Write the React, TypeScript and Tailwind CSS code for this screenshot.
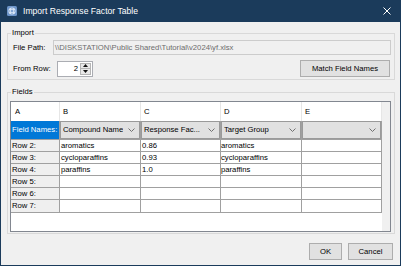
import React from "react";

const rows = [
  { label: "Row 2:", b: "aromatics", c: "0.86", d: "aromatics", e: "" },
  { label: "Row 3:", b: "cycloparaffins", c: "0.93", d: "cycloparaffins", e: "" },
  { label: "Row 4:", b: "paraffins", c: "1.0", d: "paraffins", e: "" },
  { label: "Row 5:", b: "", c: "", d: "", e: "" },
  { label: "Row 6:", b: "", c: "", d: "", e: "" },
  { label: "Row 7:", b: "", c: "", d: "", e: "" },
];

const combos = ["Compound Name", "Response Fac...", "Target Group", ""];

function AppIcon() {
  return (
    <svg width="10" height="10" viewBox="0 0 10 10" className="shrink-0">
      <rect x="0" y="0" width="10" height="10" rx="1.5" fill="#6d95c9" />
      <circle cx="5" cy="5" r="3.6" fill="#d6e4f5" />
      <circle cx="5" cy="5" r="1.2" fill="#7fa3d3" />
      <circle cx="5" cy="2.6" r="0.7" fill="#7fa3d3" />
      <circle cx="5" cy="7.4" r="0.7" fill="#7fa3d3" />
      <circle cx="2.6" cy="5" r="0.7" fill="#7fa3d3" />
      <circle cx="7.4" cy="5" r="0.7" fill="#7fa3d3" />
    </svg>
  );
}

function Chevron() {
  return (
    <svg width="7" height="4" viewBox="0 0 7 4" className="shrink-0">
      <polyline points="0.5,0.5 3.5,3.5 6.5,0.5" fill="none" stroke="#707070" strokeWidth="1" />
    </svg>
  );
}

function Combo({ text }: { text: string }) {
  return (
    <div className="h-full flex items-center justify-between border border-[#9a9a9a] bg-[#e1e1e1] pl-[2px] pr-[4px]">
      <span className="truncate">{text}</span>
      <Chevron />
    </div>
  );
}

export default function App() {
  return (
    <div className="w-[401px] h-[266px] flex flex-col bg-[#f0f0f0] border-x border-b border-[#1b3b5b] font-['Liberation_Sans',Arial,sans-serif] text-[7.7px] leading-none text-black select-none">
      <div className="h-[22px] shrink-0 bg-[#1b3b5b] flex items-center pl-[6px] pr-[9px] text-white">
        <AppIcon />
        <span className="ml-[6px] text-[8.6px]">Import Response Factor Table</span>
        <svg width="8" height="8" viewBox="0 0 8 8" className="ml-auto">
          <path d="M0.5 0.5 L7.5 7.5 M7.5 0.5 L0.5 7.5" stroke="#ffffff" strokeWidth="1" />
        </svg>
      </div>

      <fieldset className="mt-[6px] ml-[6px] mr-[5px] border border-[#d9d9d9] pl-[5px] pr-[3px] pt-[2px] pb-[2px]">
        <legend className="-ml-[2px] px-[1px] h-[10px] leading-[10px]">Import</legend>
        <div className="flex items-center h-[15px]">
          <span className="w-[40px] shrink-0">File Path:</span>
          <div className="flex-1 h-full border border-[#cccccc] bg-[#f0f0f0] text-[#6d6d6d] flex items-center pl-[1px]">
            {"\\\\DISKSTATION\\Public Shared\\Tutorial\\v2024\\yf.xlsx"}
          </div>
        </div>
        <div className="mt-[5px] flex items-center h-[17px]">
          <span className="w-[44px] shrink-0">From Row:</span>
          <div className="w-[36px] h-[16px] border border-[#abadb3] bg-white flex items-center">
            <span className="flex-1 text-right pr-[2px]">2</span>
            <div className="w-[12px] h-full flex flex-col py-px pr-px">
              <div className="flex-1 border border-[#b5b5b5] bg-[#e8e8e8] flex items-center justify-center">
                <svg width="5" height="3" viewBox="0 0 5 3"><polygon points="2.5,0 5,3 0,3" fill="#111" /></svg>
              </div>
              <div className="flex-1 border border-t-0 border-[#b5b5b5] bg-[#e8e8e8] flex items-center justify-center">
                <svg width="5" height="3" viewBox="0 0 5 3"><polygon points="0,0 5,0 2.5,3" fill="#111" /></svg>
              </div>
            </div>
          </div>
          <button className="ml-auto mr-[1px] w-[90px] h-[17px] border border-[#adadad] bg-[#e1e1e1]">
            Match Field Names
          </button>
        </div>
      </fieldset>

      <fieldset className="mt-[7px] ml-[6px] mr-[5px] border border-[#d9d9d9] pl-[2px] pr-[3px] pt-[4px] pb-[1px]">
        <legend className="ml-[1px] px-[1px] h-[10px] leading-[10px]">Fields</legend>
        <div className="h-[131px] border border-[#828790] bg-white flex">
          <div className="w-[371px] flex flex-col">
            <div className="grid grid-cols-[49px_81px_80px_81px_80px] h-[19px]">
              {["A", "B", "C", "D", "E"].map((l, i) => (
                <div key={l} className={`flex items-center border-r border-[#e6e6e6] ${i === 0 ? "pl-[4px]" : "pl-[3px]"}`}>
                  {l}
                </div>
              ))}
            </div>
            <div className="grid grid-cols-[49px_81px_80px_81px_80px] h-[18px]">
              <div className="flex items-center bg-[#0078d7] text-white pl-[1px] border-r border-[#a0a0a0]">Field Names:</div>
              {combos.map((c, i) => (
                <div key={i} className="border-r border-[#a0a0a0]">
                  <Combo text={c} />
                </div>
              ))}
            </div>
            {rows.map((r, i) => (
              <div
                key={r.label}
                className={`grid grid-cols-[49px_81px_80px_81px_80px] h-[12px] border-t border-[#a0a0a0] ${i === rows.length - 1 ? "box-content border-b" : ""}`}
              >
                <div className="flex items-center bg-[#efefef] pl-[1px] border-r border-[#a0a0a0]">{r.label}</div>
                <div className="flex items-center pl-[1px] border-r border-[#a0a0a0]">{r.b}</div>
                <div className="flex items-center pl-[1px] border-r border-[#a0a0a0]">{r.c}</div>
                <div className="flex items-center border-r border-[#a0a0a0]">{r.d}</div>
                <div className="flex items-center pl-[1px] border-r border-[#a0a0a0]">{r.e}</div>
              </div>
            ))}
          </div>
          <div className="flex-1 bg-[#f0f0f0]" />
        </div>
      </fieldset>

      <div className="mt-[9px] flex justify-end gap-[6px] pr-[7px]">
        <button className="w-[33px] h-[17px] border border-[#adadad] bg-[#e1e1e1]">OK</button>
        <button className="w-[45px] h-[17px] border border-[#adadad] bg-[#e1e1e1]">Cancel</button>
      </div>
    </div>
  );
}
